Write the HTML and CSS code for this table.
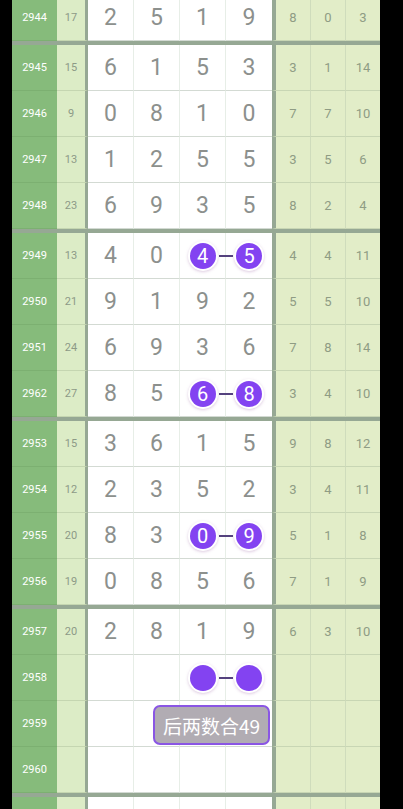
FILE: index.html
```html
<!DOCTYPE html>
<html lang="zh">
<head>
  <meta charset="UTF-8">
  <meta name="viewport" content="width=device-width, initial-scale=1.0">
  <title>走势图</title>
  <link rel="stylesheet" href="styles.css">
</head>
<body>

<!-- Trend table -->
<div class="chart">

  <div class="group first">
    <div class="row">
      <div class="cell period">2944</div><div class="cell sum">17</div>
      <div class="cell num">2</div><div class="cell num">5</div><div class="cell num">1</div><div class="cell num">9</div>
      <div class="cell gap">8</div><div class="cell gap">0</div><div class="cell gap">3</div>
    </div>
  </div>

  <div class="group">
    <div class="row">
      <div class="cell period">2945</div><div class="cell sum">15</div>
      <div class="cell num">6</div><div class="cell num">1</div><div class="cell num">5</div><div class="cell num">3</div>
      <div class="cell gap">3</div><div class="cell gap">1</div><div class="cell gap">14</div>
    </div>
    <div class="row">
      <div class="cell period">2946</div><div class="cell sum">9</div>
      <div class="cell num">0</div><div class="cell num">8</div><div class="cell num">1</div><div class="cell num">0</div>
      <div class="cell gap">7</div><div class="cell gap">7</div><div class="cell gap">10</div>
    </div>
    <div class="row">
      <div class="cell period">2947</div><div class="cell sum">13</div>
      <div class="cell num">1</div><div class="cell num">2</div><div class="cell num">5</div><div class="cell num">5</div>
      <div class="cell gap">3</div><div class="cell gap">5</div><div class="cell gap">6</div>
    </div>
    <div class="row">
      <div class="cell period">2948</div><div class="cell sum">23</div>
      <div class="cell num">6</div><div class="cell num">9</div><div class="cell num">3</div><div class="cell num">5</div>
      <div class="cell gap">8</div><div class="cell gap">2</div><div class="cell gap">4</div>
    </div>
  </div>

  <div class="group">
    <div class="row">
      <div class="cell period">2949</div><div class="cell sum">13</div>
      <div class="cell num">4</div><div class="cell num">0</div>
      <div class="cell num"><span class="ball linked">4</span></div><div class="cell num"><span class="ball">5</span></div>
      <div class="cell gap">4</div><div class="cell gap">4</div><div class="cell gap">11</div>
    </div>
    <div class="row">
      <div class="cell period">2950</div><div class="cell sum">21</div>
      <div class="cell num">9</div><div class="cell num">1</div><div class="cell num">9</div><div class="cell num">2</div>
      <div class="cell gap">5</div><div class="cell gap">5</div><div class="cell gap">10</div>
    </div>
    <div class="row">
      <div class="cell period">2951</div><div class="cell sum">24</div>
      <div class="cell num">6</div><div class="cell num">9</div><div class="cell num">3</div><div class="cell num">6</div>
      <div class="cell gap">7</div><div class="cell gap">8</div><div class="cell gap">14</div>
    </div>
    <div class="row">
      <div class="cell period">2962</div><div class="cell sum">27</div>
      <div class="cell num">8</div><div class="cell num">5</div>
      <div class="cell num"><span class="ball linked">6</span></div><div class="cell num"><span class="ball">8</span></div>
      <div class="cell gap">3</div><div class="cell gap">4</div><div class="cell gap">10</div>
    </div>
  </div>

  <div class="group">
    <div class="row">
      <div class="cell period">2953</div><div class="cell sum">15</div>
      <div class="cell num">3</div><div class="cell num">6</div><div class="cell num">1</div><div class="cell num">5</div>
      <div class="cell gap">9</div><div class="cell gap">8</div><div class="cell gap">12</div>
    </div>
    <div class="row">
      <div class="cell period">2954</div><div class="cell sum">12</div>
      <div class="cell num">2</div><div class="cell num">3</div><div class="cell num">5</div><div class="cell num">2</div>
      <div class="cell gap">3</div><div class="cell gap">4</div><div class="cell gap">11</div>
    </div>
    <div class="row">
      <div class="cell period">2955</div><div class="cell sum">20</div>
      <div class="cell num">8</div><div class="cell num">3</div>
      <div class="cell num"><span class="ball linked">0</span></div><div class="cell num"><span class="ball">9</span></div>
      <div class="cell gap">5</div><div class="cell gap">1</div><div class="cell gap">8</div>
    </div>
    <div class="row">
      <div class="cell period">2956</div><div class="cell sum">19</div>
      <div class="cell num">0</div><div class="cell num">8</div><div class="cell num">5</div><div class="cell num">6</div>
      <div class="cell gap">7</div><div class="cell gap">1</div><div class="cell gap">9</div>
    </div>
  </div>

  <div class="group">
    <div class="row">
      <div class="cell period">2957</div><div class="cell sum">20</div>
      <div class="cell num">2</div><div class="cell num">8</div><div class="cell num">1</div><div class="cell num">9</div>
      <div class="cell gap">6</div><div class="cell gap">3</div><div class="cell gap">10</div>
    </div>
    <div class="row">
      <div class="cell period">2958</div><div class="cell sum"></div>
      <div class="cell num"></div><div class="cell num"></div>
      <div class="cell num"><span class="ball linked"></span></div><div class="cell num"><span class="ball"></span></div>
      <div class="cell gap"></div><div class="cell gap"></div><div class="cell gap"></div>
    </div>
    <div class="row">
      <div class="cell period">2959</div><div class="cell sum"></div>
      <div class="cell num"></div><div class="cell num"></div><div class="cell num"></div><div class="cell num"></div>
      <div class="cell gap"></div><div class="cell gap"></div><div class="cell gap"></div>
      <!-- Prediction tag over the last two columns -->
      <div class="tag">后两数合49</div>
    </div>
    <div class="row">
      <div class="cell period">2960</div><div class="cell sum"></div>
      <div class="cell num"></div><div class="cell num"></div><div class="cell num"></div><div class="cell num"></div>
      <div class="cell gap"></div><div class="cell gap"></div><div class="cell gap"></div>
    </div>
  </div>

  <div class="group">
    <div class="row">
      <div class="cell period"></div><div class="cell sum"></div>
      <div class="cell num"></div><div class="cell num"></div><div class="cell num"></div><div class="cell num"></div>
      <div class="cell gap"></div><div class="cell gap"></div><div class="cell gap"></div>
    </div>
  </div>

</div>

</body>
</html>
```

FILE: styles.css
```css
body {
  margin: 0;
  background-color: #000000;
  font-family: Roboto, "Noto Sans", sans-serif;
  overflow: hidden;
}

.chart {
  width: 368px;
  margin-left: 12px;
  margin-top: -5px;
}

.group {
  border-bottom: 4px solid #96a894;
}

.row {
  position: relative;
  display: grid;
  grid-template-columns: 45px 31px 46px 46px 46px 46px 39px 35px 34px;
  height: 46px;
}

.cell {
  box-sizing: border-box;
  display: flex;
  justify-content: center;
  align-items: center;
  border-bottom: 1px solid #d3dad3;
}

/* Period number */
.period {
  background-color: #86bb7b;
  color: #ffffff;
  font-size: 11px;
  border-bottom-color: #7cb071;
}

/* Sum column */
.sum {
  background-color: #dcecc6;
  color: #8d9a86;
  font-size: 11px;
  border-right: 3px solid #96a894;
  border-bottom-color: #c5d6b1;
}

/* Digit columns */
.num {
  background-color: #ffffff;
  color: #8c908d;
  font-size: 23px;
  border-right: 1px solid #e7eee7;
}

.num:nth-child(6) {
  border-right: none;
}

/* Gap columns */
.gap {
  background-color: #e2edc8;
  color: #8f9c84;
  font-size: 13px;
  border-right: 1px solid #cfdcbc;
  border-bottom-color: #c8d6b4;
}

.gap:nth-child(7) {
  border-left: 4px solid #96a894;
}

.gap:nth-child(9) {
  border-right: none;
}

.ball {
  position: relative;
  display: flex;
  justify-content: center;
  align-items: center;
  width: 26px;
  height: 26px;
  border-radius: 50%;
  background-color: #8343f1;
  color: #ffffff;
  font-size: 20px;
  box-shadow: 0 0 0 2px #ffffff, 0 1px 3px 2px rgba(160, 110, 170, 0.35);
}

/* Dash joining the two balls */
.ball.linked::after {
  content: "";
  position: absolute;
  left: 29px;
  top: 12px;
  width: 14px;
  height: 2px;
  background-color: #54427e;
}

.tag {
  position: absolute;
  left: 141px;
  top: 4px;
  box-sizing: border-box;
  width: 117px;
  height: 40px;
  display: flex;
  justify-content: center;
  align-items: center;
  border: 2px solid #8a56e4;
  border-radius: 7px;
  background-color: #b1acb3;
  color: #ffffff;
  font-family: "Noto Sans CJK SC", sans-serif;
  font-size: 19px;
}
```
